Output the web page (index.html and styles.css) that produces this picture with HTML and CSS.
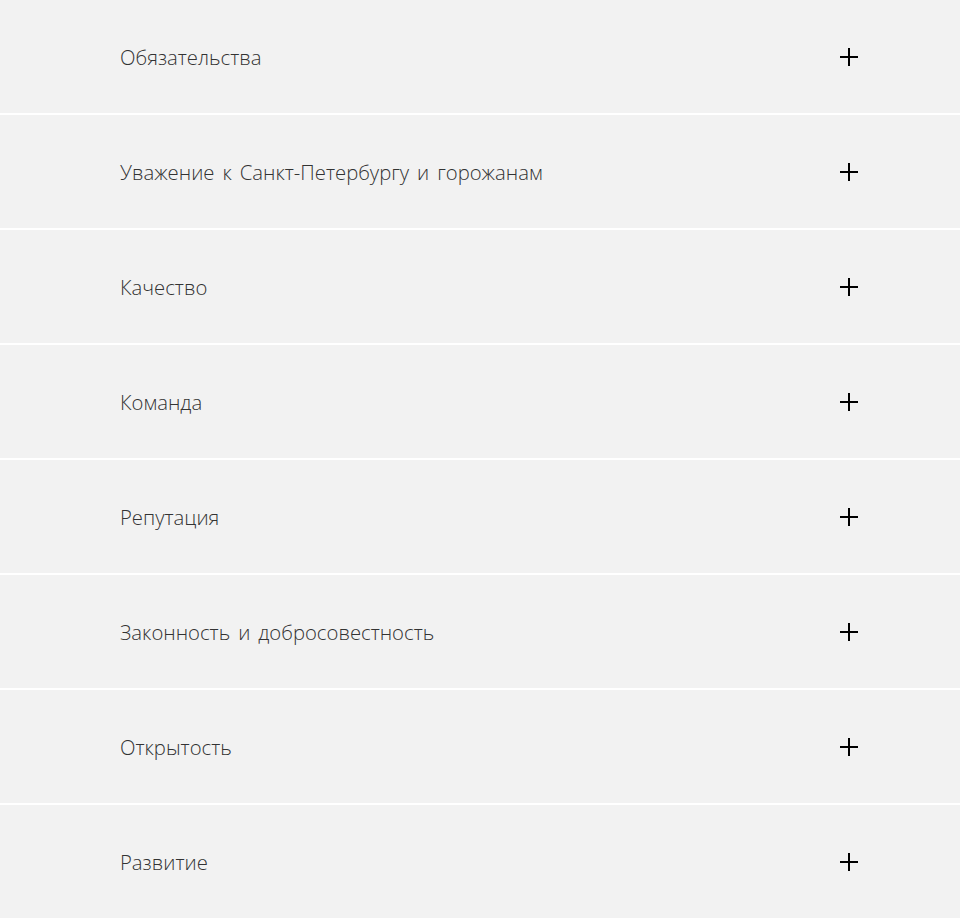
FILE: index.html
```html
<!DOCTYPE html>
<html lang="ru">
<head>
<meta charset="utf-8">
<link rel="stylesheet" href="styles.css">
</head>
<body>
<div class="list">
  <div class="item"><span class="title">Обязательства</span><span class="plus"></span></div>
  <div class="item"><span class="title">Уважение к Санкт-Петербургу и горожанам</span><span class="plus"></span></div>
  <div class="item"><span class="title">Качество</span><span class="plus"></span></div>
  <div class="item"><span class="title">Команда</span><span class="plus"></span></div>
  <div class="item"><span class="title">Репутация</span><span class="plus"></span></div>
  <div class="item"><span class="title">Законность и добросовестность</span><span class="plus"></span></div>
  <div class="item"><span class="title">Открытость</span><span class="plus"></span></div>
  <div class="item"><span class="title">Развитие</span><span class="plus"></span></div>
</div>
</body>
</html>
```

FILE: styles.css
```css
html, body {
  margin: 0;
  padding: 0;
  background: #ffffff;
}
.list {
  display: flex;
  flex-direction: column;
  gap: 2px;
}
.item {
  height: 113px;
  background: #f2f2f2;
  display: flex;
  align-items: center;
  justify-content: space-between;
  padding: 0 102px 0 120px;
}
.title {
  font-family: "Open Sans", sans-serif;
  font-weight: 300;
  font-size: 20.3px;
  word-spacing: 2.7px;
  color: #333333;
}
.plus {
  position: relative;
  width: 18px;
  height: 18px;
}
.plus::before, .plus::after {
  content: "";
  position: absolute;
  background: #000;
}
.plus::before {
  left: 0;
  top: 8px;
  width: 18px;
  height: 2px;
}
.plus::after {
  left: 8px;
  top: 0;
  width: 2px;
  height: 18px;
}
```
